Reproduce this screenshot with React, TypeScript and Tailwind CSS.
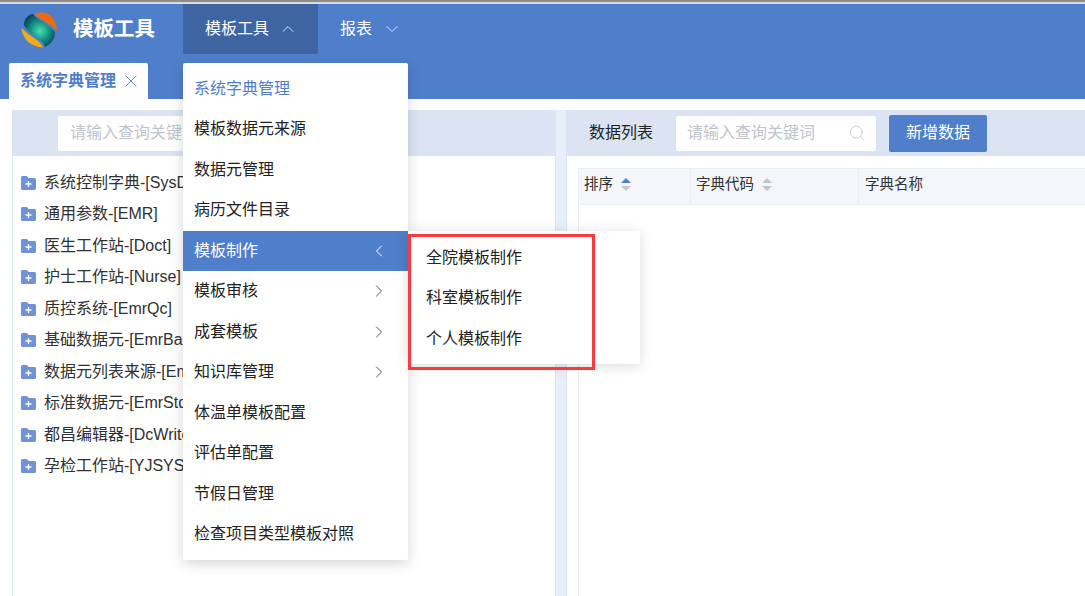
import { ChevronDown, ChevronLeft, ChevronRight, ChevronUp, Search, X } from "lucide-react";

const treeItems = [
  "系统控制字典-[SysDict]",
  "通用参数-[EMR]",
  "医生工作站-[Doct]",
  "护士工作站-[Nurse]",
  "质控系统-[EmrQc]",
  "基础数据元-[EmrBase]",
  "数据元列表来源-[EmrList]",
  "标准数据元-[EmrStd]",
  "都昌编辑器-[DcWriter]",
  "孕检工作站-[YJSYS]",
];

const menuItems = [
  { label: "系统字典管理", active: true },
  { label: "模板数据元来源" },
  { label: "数据元管理" },
  { label: "病历文件目录" },
  { label: "模板制作", open: true },
  { label: "模板审核", arrow: true },
  { label: "成套模板", arrow: true },
  { label: "知识库管理", arrow: true },
  { label: "体温单模板配置" },
  { label: "评估单配置" },
  { label: "节假日管理" },
  { label: "检查项目类型模板对照" },
];

const subItems = ["全院模板制作", "科室模板制作", "个人模板制作"];

function Logo() {
  return (
    <svg width="37" height="37" viewBox="0 0 37 37" className="shrink-0">
      <defs>
        <radialGradient id="logoGreen" gradientUnits="userSpaceOnUse" cx="19" cy="20" r="17">
          <stop offset="0%" stopColor="#45e0b0" />
          <stop offset="55%" stopColor="#149184" />
          <stop offset="100%" stopColor="#0b4a5c" />
        </radialGradient>
      </defs>
      <path d="M3 14C3 8 7 3 12 3C16 9 28 13 34 21C34 28 30 33 24 36C22 28 8 24 3 14Z" fill="url(#logoGreen)" />
      <path d="M14 3C19 .5 26 1 30 5C34 9 36 14 36 20C32 14 22 11 14 3Z" fill="#ee6a0c" />
      <path d="M.5 17C1 28 10 36 22 36.500C20 30 10 26 .5 17Z" fill="#f0ac16" />
    </svg>
  );
}

function FolderPlus() {
  return (
    <svg width="15" height="14" viewBox="0 0 15 14" className="shrink-0">
      <path d="M0 1.500C0 .7.700 0 1.500 0H6l1.500 2H13.500C14.300 2 15 2.700 15 3.500V12.500C15 13.300 14.300 14 13.500 14H1.500C.7 14 0 13.300 0 12.500Z" fill="#6f93d6" />
      <path d="M7.500 5V11M4.500 8H10.500" stroke="#fff" strokeWidth="1.300" />
    </svg>
  );
}

function SortCaret({ active }: { active?: boolean }) {
  return (
    <span className="flex flex-col gap-[3px]">
      <span className={`h-0 w-0 border-x-[5px] border-b-[5px] border-x-transparent ${active ? "border-b-[#4f7ecb]" : "border-b-[#c0c4cc]"}`} />
      <span className="h-0 w-0 border-x-[5px] border-t-[5px] border-x-transparent border-t-[#c0c4cc]" />
    </span>
  );
}

export default function App() {
  return (
    <div className="relative flex h-[596px] w-[1085px] flex-col overflow-hidden bg-white font-['Liberation_Sans','Noto_Sans_CJK_SC',sans-serif] text-[16px] text-[#303133]">
      <div className="h-1 shrink-0 border-t-2 border-[#8d8d8d] bg-[#dcdcdc]" />

      <header className="flex h-[95px] shrink-0 flex-col bg-[#4f7ecb]">
        <div className="flex h-[50px] items-center">
          <div className="flex w-[183px] items-center pl-[21px]">
            <Logo />
            <span className="ml-[15px] text-[20.5px] font-bold text-white">模板工具</span>
          </div>
          <div className="flex h-full w-[135px] items-center bg-[#3f64a2] pl-[22px] text-white">
            模板工具
            <ChevronUp size={20} strokeWidth={1.2} className="ml-[9px] text-[#d7e1f3]" />
          </div>
          <div className="flex h-full items-center pl-[22px] text-white">
            报表
            <ChevronDown size={20} strokeWidth={1.2} className="ml-[10px] text-[#d7e1f3]" />
          </div>
        </div>
        <div className="mt-[9px] pl-[9px]">
          <div className="flex h-[36px] w-[139px] items-center rounded-t-[2px] bg-white pl-[11px] font-semibold text-[#4f7ecb]">
            系统字典管理
            <X size={20} strokeWidth={1.2} className="ml-[5px] text-[#5f87cc]" />
          </div>
        </div>
      </header>

      <main className="flex min-h-0 flex-1 pl-[12px] pt-[11px]">
        <section className="w-[544px] shrink-0 border-x border-[#d9e4f5]">
          <div className="flex h-[46px] items-center rounded-t-[2px] bg-[#dce4f4] pl-[45px]">
            <div className="flex h-[35px] w-[250px] items-center rounded-[2px] bg-white pl-[12px] text-[#c0c4cc]">
              请输入查询关键词
            </div>
          </div>
          <ul className="pt-[11px]">
            {treeItems.map((item) => (
              <li key={item} className="flex h-[31.5px] items-center whitespace-nowrap pl-[8px]">
                <FolderPlus />
                <span className="ml-[8px]">{item}</span>
              </li>
            ))}
          </ul>
        </section>

        <div className="w-[10px] shrink-0 bg-[#e9eff9]" />

        <section className="flex min-w-0 flex-1 flex-col border-l border-[#d9e4f5]">
          <div className="flex h-[46px] shrink-0 items-center bg-[#dce4f4] pl-[22px]">
            <span className="text-[#222]">数据列表</span>
            <div className="ml-[23px] flex h-[35px] w-[200px] items-center justify-between rounded-[2px] bg-white pl-[11px] pr-[10px] text-[#c0c4cc]">
              请输入查询关键词
              <Search size={18} strokeWidth={1.1} />
            </div>
            <button className="ml-[13px] h-[37px] w-[98px] rounded-[2px] bg-[#4f7ecb] text-white">新增数据</button>
          </div>
          <div className="min-h-0 flex-1 pl-[11px] pt-[12px]">
            <div className="h-full border-l border-[#e8edf5]">
              <div className="flex h-[37px] items-center border-y border-[#e8edf5] bg-[#f4f6fa] text-[14.5px]">
                <div className="flex h-full w-[112px] items-center gap-[8px] border-r border-[#e8edf5] pb-[4px] pl-[5px]">
                  排序
                  <SortCaret active />
                </div>
                <div className="flex h-full w-[168px] items-center gap-[8px] border-r border-[#e8edf5] pb-[4px] pl-[5px]">
                  字典代码
                  <SortCaret />
                </div>
                <div className="pb-[4px] pl-[6px]">字典名称</div>
              </div>
            </div>
          </div>
        </section>
      </main>

      <nav className="absolute left-[183px] top-[63px] h-[497px] w-[225px] rounded-[2px] bg-white pt-[5.7px] text-[#222] shadow-[0_4px_14px_rgba(0,0,0,0.16)]">
        {menuItems.map((item) => (
          <div
            key={item.label}
            className={`flex h-[40.5px] items-center justify-between pl-[11px] pr-[19px] ${
              item.open ? "bg-[#4f7ecb] text-white" : item.active ? "text-[#4f7ecb]" : ""
            }`}
          >
            {item.label}
            {item.open && <ChevronLeft size={20} strokeWidth={1.2} />}
            {item.arrow && <ChevronRight size={20} strokeWidth={1.2} className="text-[#555]" />}
          </div>
        ))}
      </nav>

      <div className="absolute left-[408px] top-[231px] flex h-[133px] w-[232px] flex-col rounded-[2px] bg-white pl-[18px] pt-[6.3px] text-[#222] shadow-[0_2px_14px_rgba(0,0,0,0.14)]">
        {subItems.map((item) => (
          <div key={item} className="flex h-[40.5px] shrink-0 items-center">
            {item}
          </div>
        ))}
      </div>

      <div className="absolute left-[408px] top-[234px] h-[136px] w-[187px] border-[3px] border-[#fb3a3f]" />
    </div>
  );
}
